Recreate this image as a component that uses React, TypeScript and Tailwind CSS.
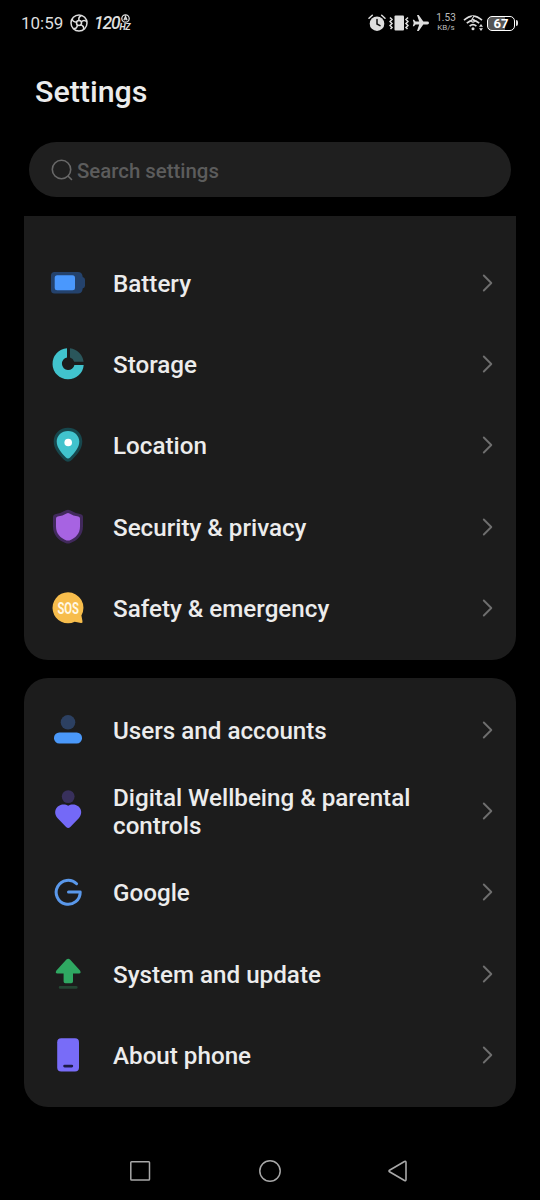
import type { ReactNode } from 'react'

interface Item {
  label: string
  icon: ReactNode
}

const deviceItems: Item[] = [
  {
    label: 'Battery',
    icon: (
      <>
        <path d="M6.500 9h23.500q3.500 0 4.300 3l.4 2q2.300.8 2.300 2.800v6q0 2-2.300 2.800l-.4 2q-.8 3-4.300 3H6.500q-3.500 0-3.500-3.500V12.500Q3 9 6.500 9z" fill="#24426c" />
        <rect x="6.700" y="12.300" width="20.300" height="15" rx="2.500" fill="#4a98fd" />
      </>
    ),
  },
  {
    label: 'Storage',
    icon: (
      <>
        <path d="M22 4.200A15.500 15.500 0 0 1 35.600 17.800H26.200A6.500 6.500 0 0 0 22 13.600z" fill="#2a565b" />
        <path d="M19 4.200A15.600 15.600 0 1 0 35.700 20.900H26.400A6.300 6.300 0 1 1 19 13.500z" fill="#41c3cd" />
      </>
    ),
  },
  {
    label: 'Location',
    icon: (
      <>
        <path d="M20 2.700c8.200 0 14.300 6 14.300 13.700 0 7.600-5.300 13-10.300 18.400q-4 3.900-8 0C11 29.400 5.700 24 5.700 16.400 5.700 8.700 11.800 2.700 20 2.700z" fill="#17474d" />
        <path d="M20 5.900c6.400 0 11.300 4.700 11.300 10.700 0 6.200-4.800 11.300-9.200 16q-2.100 2-4.200 0c-4.400-4.700-9.200-9.800-9.200-16C8.700 10.600 13.600 5.900 20 5.900z" fill="#41c3cd" />
        <circle cx="20.200" cy="17.500" r="3.800" fill="#fff" />
      </>
    ),
  },
  {
    label: 'Security & privacy',
    icon: (
      <>
        <path d="M20 2.700q1 0 2 .6 4.500 2.700 10 3.600 3 .5 3 3.300v9c0 9-5.500 14.200-13 17q-2 .8-4 0C10.500 33.400 5 28.200 5 19.200v-9q0-2.800 3-3.300 5.500-.9 10-3.600 1-.6 2-.6z" fill="#41295c" />
        <path d="M20 6q.8 0 1.500.4 3.700 2.200 8.800 3.100 1.700.3 1.700 2v8c0 7.200-4.500 11.700-10.600 13.900q-1.400.4-2.800 0C12.500 31.200 8 26.700 8 19.500v-8q0-1.700 1.700-2 5.100-.9 8.800-3.100Q19.200 6 20 6z" fill="#a763e2" />
      </>
    ),
  },
  {
    label: 'Safety & emergency',
    icon: (
      <>
        <path d="M20 4.300A15.500 15.500 0 0 1 33.400 27.500l1.100 5.700q.4 2-1.500 1.900l-6.300-1.300A15.500 15.500 0 1 1 20 4.300z" fill="#f7bd4c" />
        <text x="20.200" y="26" textAnchor="middle" textLength="21.500" lengthAdjust="spacingAndGlyphs" className="font-[Roboto] text-[17px] font-bold" fill="#fff8e4">
          SOS
        </text>
      </>
    ),
  },
]

const systemItems: Item[] = [
  {
    label: 'Users and accounts',
    icon: (
      <>
        <circle cx="20" cy="12.300" r="7.300" fill="#2c4061" />
        <rect x="6" y="22.500" width="28" height="11" rx="5.300" fill="#4a98f9" />
      </>
    ),
  },
  {
    label: 'Digital Wellbeing & parental controls',
    icon: (
      <>
        <circle cx="20.200" cy="5.600" r="6.400" fill="#38305c" />
        <path d="M20.200 14.800C23 13 27.600 13 30.600 15.600c3.300 3 3.500 8 .4 11.300l-8.700 9q-2.100 2-4.200 0l-8.700-9c-3.100-3.300-2.900-8.300.4-11.300 3-2.600 7.600-2.600 10.400-.8z" fill="#7469f7" />
      </>
    ),
  },
  {
    label: 'Google',
    icon: (
      <path d="M28.600 11.700A12 12 0 1 0 32.200 20H20.500" fill="none" stroke="#5a98ea" strokeWidth="3" strokeLinecap="round" strokeLinejoin="round" />
    ),
  },
  {
    label: 'System and update',
    icon: (
      <>
        <path d="M18.400 5.600q1.800-1.700 3.600 0l10 11q1.600 2.800-1 2.900H25v8q0 1.700-1.700 1.700h-6q-1.700 0-1.700-1.700v-8H9.400q-2.600-.1-1-2.900z" fill="#2fa862" />
        <rect x="10.800" y="32" width="18.800" height="2.700" rx="1.300" fill="#244633" />
      </>
    ),
  },
  {
    label: 'About phone',
    icon: (
      <>
        <rect x="9.200" y="3.200" width="21.800" height="33.300" rx="4" fill="#786cf8" />
        <rect x="15.200" y="29.700" width="10" height="2.800" rx="1.400" fill="#1c1a45" />
      </>
    ),
  },
]

function Chevron() {
  return (
    <svg viewBox="0 0 12 20" className="h-5 w-3 shrink-0" fill="none" stroke="#6e6e6e" strokeWidth="1.900" strokeLinecap="round" strokeLinejoin="round">
      <path d="M2.800 2.500 10.300 10l-7.500 7.500" />
    </svg>
  )
}

function Row({ label, icon }: Item) {
  return (
    <button className="flex h-[81.300px] w-full items-center pr-[23px] pl-6 text-left">
      <svg viewBox="0 0 40 40" className="size-10 shrink-0 overflow-visible">
        {icon}
      </svg>
      <span className="ml-[25px] flex-1 pt-0.5 pr-12 text-[24.200px] leading-7 font-medium">{label}</span>
      <Chevron />
    </button>
  )
}

function StatusBar() {
  return (
    <div className="flex h-[46px] items-center pr-[22px] pl-[21px] text-[#dedede]">
      <span className="w-[49px] pt-0.5 text-[17px]">10:59</span>
      <svg viewBox="0 0 18 18" className="size-[18px]" fill="none" stroke="currentColor" strokeWidth="1.500">
        <circle cx="9" cy="9" r="8" />
        <path d="M9 6.500Q8 3 11.500 1.500M11.200 8.200Q14 5 17 8M10.500 10.800Q14.500 12 13.500 15.500M7.500 10.800Q7 15 3.500 14.500M6.800 8.200Q2.500 8 2.200 4.800" />
        <circle cx="9" cy="9" r="2.500" />
      </svg>
      <span className="ml-[6px] pt-px text-[17.500px] tracking-[-1.200px] font-medium italic">120</span>
      <div className="flex flex-col items-center pb-px">
        <svg viewBox="0 0 8 8" className="ml-0.5 size-[9px]" fill="none" stroke="currentColor" strokeWidth="1.100">
          <circle cx="4" cy="4" r="3.300" />
          <path d="m2.600 5.600 1.400-3.400 1.400 3.400M3 4.600h2" />
        </svg>
        <span className="text-[9px] leading-[9px] font-bold tracking-[-0.500px] italic">HZ</span>
      </div>
      <div className="ml-auto flex items-center">
        {/* alarm */}
        <svg viewBox="0 0 18 18" className="size-[18px]" fill="none" stroke="currentColor" strokeWidth="1.500" strokeLinecap="round">
          <circle cx="9" cy="9.700" r="7.300" fill="currentColor" stroke="none" />
          <path d="M1 4.200 4.300 1.200M17 4.200 13.700 1.200" />
          <path d="M9 5.500V10l3 1.600" stroke="#111" />
        </svg>
        {/* vibrate */}
        <svg viewBox="0 0 20 18" className="ml-[3px] h-[18px] w-5" fill="none" stroke="currentColor" strokeWidth="1.500">
          <rect x="5.500" y="1.500" width="9.500" height="15" rx="1" fill="currentColor" stroke="none" />
          <path d="m1 3.500 2 2-2 2 2 2-2 2 2 2-1.500 1.500M19 3.500l-2 2 2 2-2 2 2 2-2 2 1.500 1.500" />
        </svg>
        {/* airplane mode */}
        <svg viewBox="0 0 18 18" className="ml-[3px] size-[18px]" fill="currentColor">
          <path d="M17 9q0 1.400-1.700 1.400h-4L6.700 17H5l2.200-6.600H3.500L2 12.300H.8L1.700 9 .8 5.700H2l1.500 1.900h3.700L5 1h1.700l4.600 6.600h4Q17 7.600 17 9z" />
        </svg>
        <div className="ml-[5px] flex w-[22px] flex-col items-center text-[#bcbcbc]">
          <span className="text-[10px] leading-[10px] whitespace-nowrap">1.53</span>
          <span className="text-[8px] leading-[10px] whitespace-nowrap">KB/s</span>
        </div>
        {/* wifi */}
        <svg viewBox="0 0 22 18" className="ml-[6px] h-[18px] w-[22px]" fill="none" stroke="currentColor" strokeWidth="1.600">
          <path d="M1 6.200Q10 -2 19 6.200M3.800 9.200Q10 3.500 16.200 9.200M6.600 12.200Q10 9 13.400 12.200" />
          <path d="m10.500 2.500-2 3.500" stroke="#000" strokeWidth="3" />
          <path d="M11.200 2 8.800 5.500" strokeWidth="1.100" />
          <circle cx="10" cy="6.700" r="1.500" strokeWidth="1.100" />
          <circle cx="10" cy="14.800" r="1.500" fill="currentColor" stroke="none" />
          <path d="m16 12.700 2-2.700 2 2.700zM16 14.300l2 2.700 2-2.700z" fill="currentColor" stroke="none" />
        </svg>
        <div className="ml-0.5 flex h-[15px] w-[28px] items-center justify-center rounded-[5px] border-[1.500px] border-current bg-linear-to-r from-[#555] from-65% to-black to-65% text-[13px] leading-none font-bold text-white">
          67
        </div>
        <div className="ml-px h-[6px] w-[2px] rounded-r bg-current" />
      </div>
    </div>
  )
}

export default function App() {
  return (
    <div className="flex h-[1200px] w-[540px] flex-col overflow-hidden bg-black font-[Roboto,sans-serif] text-[#ececec]">
      <StatusBar />
      <h1 className="mt-[26px] ml-[35px] text-[30.400px] leading-10 font-medium">Settings</h1>
      <div className="mt-[30px] mr-[29px] ml-[29px] flex h-[55px] shrink-0 items-center rounded-full bg-[#1f1f1f] pl-[22px]">
        <svg viewBox="0 0 22 22" className="size-[22px]" fill="none" stroke="#686868" strokeWidth="1.600" strokeLinecap="round">
          <circle cx="10.500" cy="10.500" r="9.200" />
          <path d="m17.200 17.200 3.300 3.300" />
        </svg>
        <span className="ml-1 pt-0.5 text-[20.400px] leading-6 font-medium text-[#5c5c5c]">Search settings</span>
      </div>
      <main className="mt-[19px] flex flex-col gap-[18px] px-6">
        <section className="h-[444px] rounded-b-[24px] bg-[#1c1c1c] pt-[26px]">
          {deviceItems.map((item) => (
            <Row key={item.label} {...item} />
          ))}
        </section>
        <section className="h-[429px] rounded-[24px] bg-[#1c1c1c] pt-[11px]">
          {systemItems.map((item) => (
            <Row key={item.label} {...item} />
          ))}
        </section>
      </main>
      <nav className="mt-[52px] flex h-6 items-center">
        <svg viewBox="0 0 24 24" className="ml-32 size-6" fill="none" stroke="#a8a8a8" strokeWidth="1.500">
          <rect x="2.800" y="2.800" width="18.700" height="18.200" rx=".8" />
        </svg>
        <svg viewBox="0 0 24 24" className="ml-[106px] size-6" fill="none" stroke="#a8a8a8" strokeWidth="1.500">
          <circle cx="12" cy="12" r="10.200" />
        </svg>
        <svg viewBox="0 0 24 24" className="ml-[104px] size-6" fill="none" stroke="#a8a8a8" strokeWidth="1.600" strokeLinejoin="round">
          <path d="M3.500 11.200 18.500 2.500q1.500-.6 1.500 1v17q0 1.600-1.500 1L3.500 12.800q-1-.8 0-1.600z" />
        </svg>
      </nav>
    </div>
  )
}
